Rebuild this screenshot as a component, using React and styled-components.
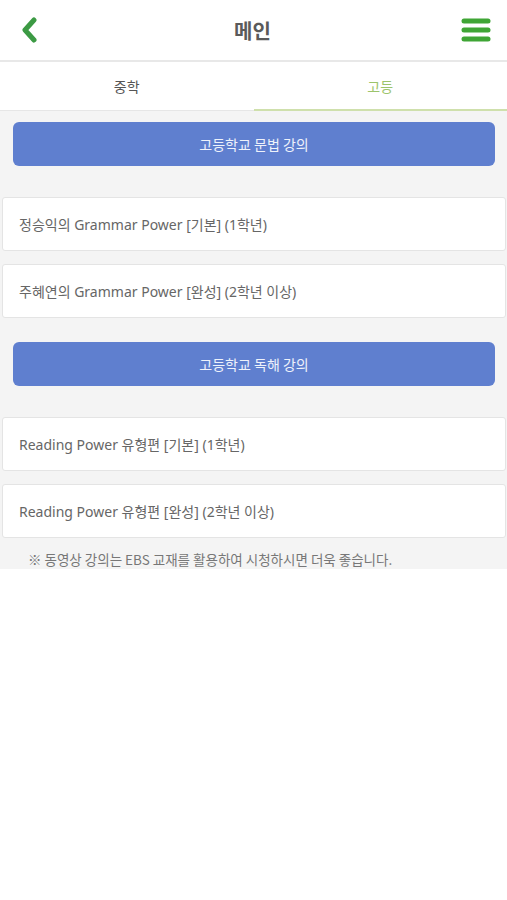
import styled, { createGlobalStyle } from "styled-components";

const GlobalStyle = createGlobalStyle`
  body {
    margin: 0;
    background: #ffffff;
    font-family: "Noto Sans", "Noto Sans CJK KR", sans-serif;
  }
`;

const Wrap = styled.div`
  width: 507px;
  display: flex;
  flex-direction: column;
`;
const Header = styled.div`
  display: flex;
  align-items: center;
  justify-content: space-between;
  padding: 0 16px 0 14px;
  border-bottom: 2px solid #e8e8e8;
  box-sizing: border-box;
  height: 62px;
`;
const Title = styled.h1`
  margin: 0;
  font-size: 20px;
  font-weight: 700;
  color: #5a5a5a;
  font-family: "Noto Sans CJK KR", sans-serif;
`;
const IconBtn = styled.div`
  width: 30px;
  height: 30px;
  display: flex;
  align-items: center;
  justify-content: center;
`;
const Tabs = styled.div`
  display: flex;
  height: 48px;
  background: #fff;
  border-bottom: 1px solid #e6e6e6;
`;
const Tab = styled.div`
  flex: 1;
  display: flex;
  align-items: center;
  justify-content: center;
  font-size: 14px;
  font-family: "Noto Sans CJK KR", sans-serif;
  color: ${(p) => (p.active ? "#9cc46b" : "#555")};
  border-bottom: 2px solid ${(p) => (p.active ? "#cfe0ac" : "transparent")};
  margin-bottom: -1px;
`;
const Content = styled.div`
  background: #f4f4f4;
  height: 458px;
  overflow: hidden;
  padding-top: 11px;
  box-sizing: border-box;
`;
const Section = styled.div`
  display: flex;
  flex-direction: column;
  gap: 13px;
  margin-bottom: 24px;
`;
const Banner = styled.div`
  margin: 0 12px 18px 13px;
  height: 44px;
  border-radius: 6px;
  background: #5f7fcf;
  color: #eef2fb;
  font-size: 14px;
  font-family: "Noto Sans CJK KR", sans-serif;
  display: flex;
  align-items: center;
  justify-content: center;
`;
const Card = styled.div`
  margin: 0 1px 0 2px;
  height: 54px;
  background: #fff;
  border: 1px solid #e4e4e4;
  border-radius: 3px;
  box-sizing: border-box;
  display: flex;
  align-items: center;
  padding-left: 16px;
  font-size: 14px;
  color: #666;
  font-family: "Noto Sans", "Noto Sans CJK KR", sans-serif;
`;
const Note = styled.p`
  margin: -12px 0 0 28px;
  font-size: 13.5px;
  line-height: 18px;
  color: #777;
  font-family: "Noto Sans CJK KR", sans-serif;
`;

const sections = [
  {
    title: "고등학교 문법 강의",
    items: ["정승익의 Grammar Power [기본] (1학년)", "주혜연의 Grammar Power [완성] (2학년 이상)"],
  },
  {
    title: "고등학교 독해 강의",
    items: ["Reading Power 유형편 [기본] (1학년)", "Reading Power 유형편 [완성] (2학년 이상)"],
  },
];

export default function App() {
  return (
    <Wrap>
      <GlobalStyle />
      <Header>
        <IconBtn>
          <svg width="18" height="26" viewBox="0 0 18 26">
            <path d="M14 3 L5 13 L14 23" fill="none" stroke="#3c9a44" strokeWidth="5" strokeLinecap="round" strokeLinejoin="round" />
          </svg>
        </IconBtn>
        <Title>메인</Title>
        <IconBtn>
          <svg width="30" height="24" viewBox="0 0 30 24">
            <g stroke="#3fa535" strokeWidth="5" strokeLinecap="round">
              <line x1="3" y1="3" x2="27" y2="3" />
              <line x1="3" y1="12" x2="27" y2="12" />
              <line x1="3" y1="21" x2="27" y2="21" />
            </g>
          </svg>
        </IconBtn>
      </Header>
      <Tabs>
        <Tab>중학</Tab>
        <Tab active>고등</Tab>
      </Tabs>
      <Content>
        {sections.map((s) => (
          <Section key={s.title}>
            <Banner>{s.title}</Banner>
            {s.items.map((it) => (
              <Card key={it}>{it}</Card>
            ))}
          </Section>
        ))}
        <Note>※ 동영상 강의는 EBS 교재를 활용하여 시청하시면 더욱 좋습니다.</Note>
      </Content>
    </Wrap>
  );
}
